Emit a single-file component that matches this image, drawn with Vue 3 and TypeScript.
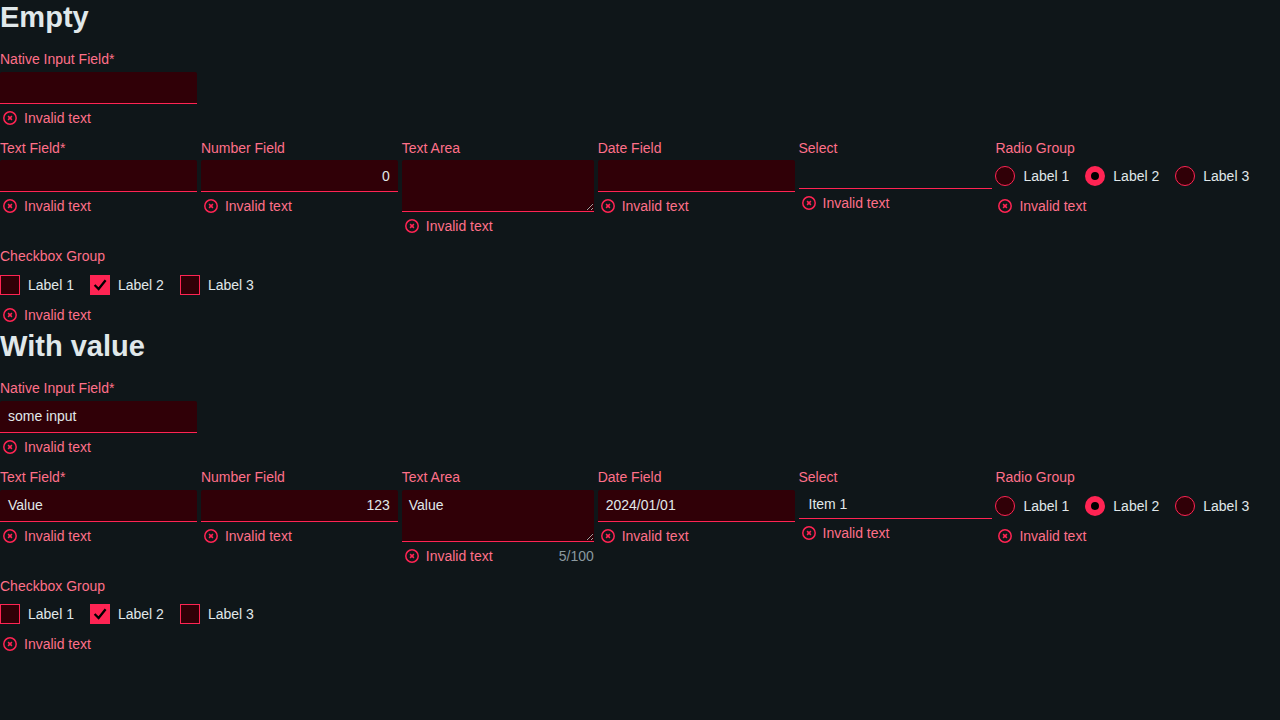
<script setup lang="ts">
interface Field {
  label: string
  kind: 'input' | 'number' | 'area' | 'select' | 'radio'
  value?: string
  counter?: string
}
interface Section {
  title: string
  native: string
  fields: Field[]
}

const build = (title: string, native: string, text: string, num: string, date: string, item: string, counter: string): Section => ({
  title,
  native,
  fields: [
    { label: 'Text Field*', kind: 'input', value: text },
    { label: 'Number Field', kind: 'number', value: num },
    { label: 'Text Area', kind: 'area', value: text, counter },
    { label: 'Date Field', kind: 'input', value: date },
    { label: 'Select', kind: 'select', value: item },
    { label: 'Radio Group', kind: 'radio' },
  ],
})

const sections: Section[] = [
  build('Empty', '', '', '0', '', '', ''),
  build('With value', 'some input', 'Value', '123', '2024/01/01', 'Item 1', '5/100'),
]
const options = [1, 2, 3]
</script>

<template>
  <main class="page">
    <svg class="defs" width="0" height="0">
      <symbol id="invalid-icon" viewBox="0 0 14 14">
        <circle cx="7" cy="7" r="6.2" />
        <path d="M5.1 5.1 8.9 8.9M8.9 5.1 5.1 8.9" />
      </symbol>
    </svg>
    <section v-for="s in sections" :key="s.title" class="section">
      <h1>{{ s.title }}</h1>
      <div class="native">
        <div class="label">Native Input Field*</div>
        <div class="control input">{{ s.native }}</div>
        <div class="helper"><svg class="icon"><use href="#invalid-icon" /></svg><span>Invalid text</span></div>
      </div>
      <div class="row">
        <div v-for="f in s.fields" :key="f.label" class="field" :class="'field-' + f.kind">
          <div class="label">{{ f.label }}</div>
          <div v-if="f.kind === 'radio'" class="options radios">
            <div v-for="n in options" :key="n" class="option">
              <span class="radio" :class="{ checked: n === 2 }"></span>Label {{ n }}
            </div>
          </div>
          <textarea v-else-if="f.kind === 'area'" class="control area" :value="f.value" spellcheck="false"></textarea>
          <div v-else class="control" :class="f.kind">{{ f.value }}</div>
          <div class="helper">
            <svg class="icon"><use href="#invalid-icon" /></svg><span>Invalid text</span>
            <span v-if="f.counter" class="counter">{{ f.counter }}</span>
          </div>
        </div>
      </div>
      <div class="group">
        <div class="label">Checkbox Group</div>
        <div class="options">
          <div v-for="n in options" :key="n" class="option">
            <span class="box" :class="{ checked: n === 2 }">
              <svg v-if="n === 2" viewBox="0 0 20 20"><path d="M4.6 10 8.6 14 15.6 5.2" /></svg>
            </span>Label {{ n }}
          </div>
        </div>
        <div class="helper"><svg class="icon"><use href="#invalid-icon" /></svg><span>Invalid text</span></div>
      </div>
    </section>
  </main>
</template>

<style>
html,
body {
  margin: 0;
  background: #0f1619;
}
</style>

<style scoped>
.page {
  height: 720px;
  background: #0f1619;
  color: #e0e8ea;
  font: 14px/20px "Liberation Sans", Arial, sans-serif;
}
.defs {
  position: absolute;
}
.section {
  display: flow-root;
  height: 329.5px;
}
h1 {
  height: 35px;
  margin: -0.2px 0 14px;
  font-size: 29.04px;
  line-height: 35px;
  font-weight: 700;
}
.native {
  width: 197px;
  height: 88.7px;
}
.label {
  height: 22.7px;
  color: #ff7089;
  white-space: nowrap;
}
.native .label {
  height: 22.9px;
}
.row {
  display: flex;
  align-items: flex-start;
  gap: 3.89px;
  height: 108.7px;
}
.field {
  width: 197px;
  flex: none;
}
.field-area {
  width: 192px;
}
.field-select {
  width: 193px;
}
.field-radio {
  width: 260px;
}
.control {
  box-sizing: border-box;
  height: 32px;
  padding: 5px 8px 6px;
  background: #300007;
  border: 0;
  border-bottom: 1px solid #ff2453;
  border-radius: 2px 2px 0 0;
}
.number {
  padding-top: 5.4px;
  text-align: right;
}
.area {
  display: block;
  width: 100%;
  height: 52px;
  margin: 0;
  padding: 5px 7px;
  outline: none;
  resize: both;
  color: inherit;
  font: inherit;
}
.select {
  height: 29px;
  padding: 4px 10px;
  background: transparent;
  border-radius: 0;
}
.helper {
  display: flex;
  align-items: center;
  height: 20px;
  margin-top: 4px;
  padding-left: 3px;
  color: #ff7089;
}
.icon {
  width: 14px;
  height: 14px;
  margin-right: 7px;
  fill: none;
  stroke: #ff2453;
  stroke-width: 1.5;
}
.counter {
  margin-left: auto;
  color: #8b999f;
}
.options {
  display: flex;
  gap: 16px;
  height: 32px;
  align-items: center;
}
.option {
  display: flex;
  align-items: center;
}
.box,
.radio {
  box-sizing: border-box;
  display: block;
  width: 20px;
  height: 20px;
  margin-right: 8px;
  background: #300007;
  border: 1px solid #ff2453;
}
.radio {
  border-radius: 50%;
}
.radio.checked {
  border-width: 6px;
  background: #000;
  background-clip: padding-box;
}
.box.checked {
  border: 0;
  background: #ff2453;
}
.box svg {
  display: block;
  width: 20px;
  height: 20px;
  fill: none;
  stroke: #000;
  stroke-width: 2.3;
}
</style>
